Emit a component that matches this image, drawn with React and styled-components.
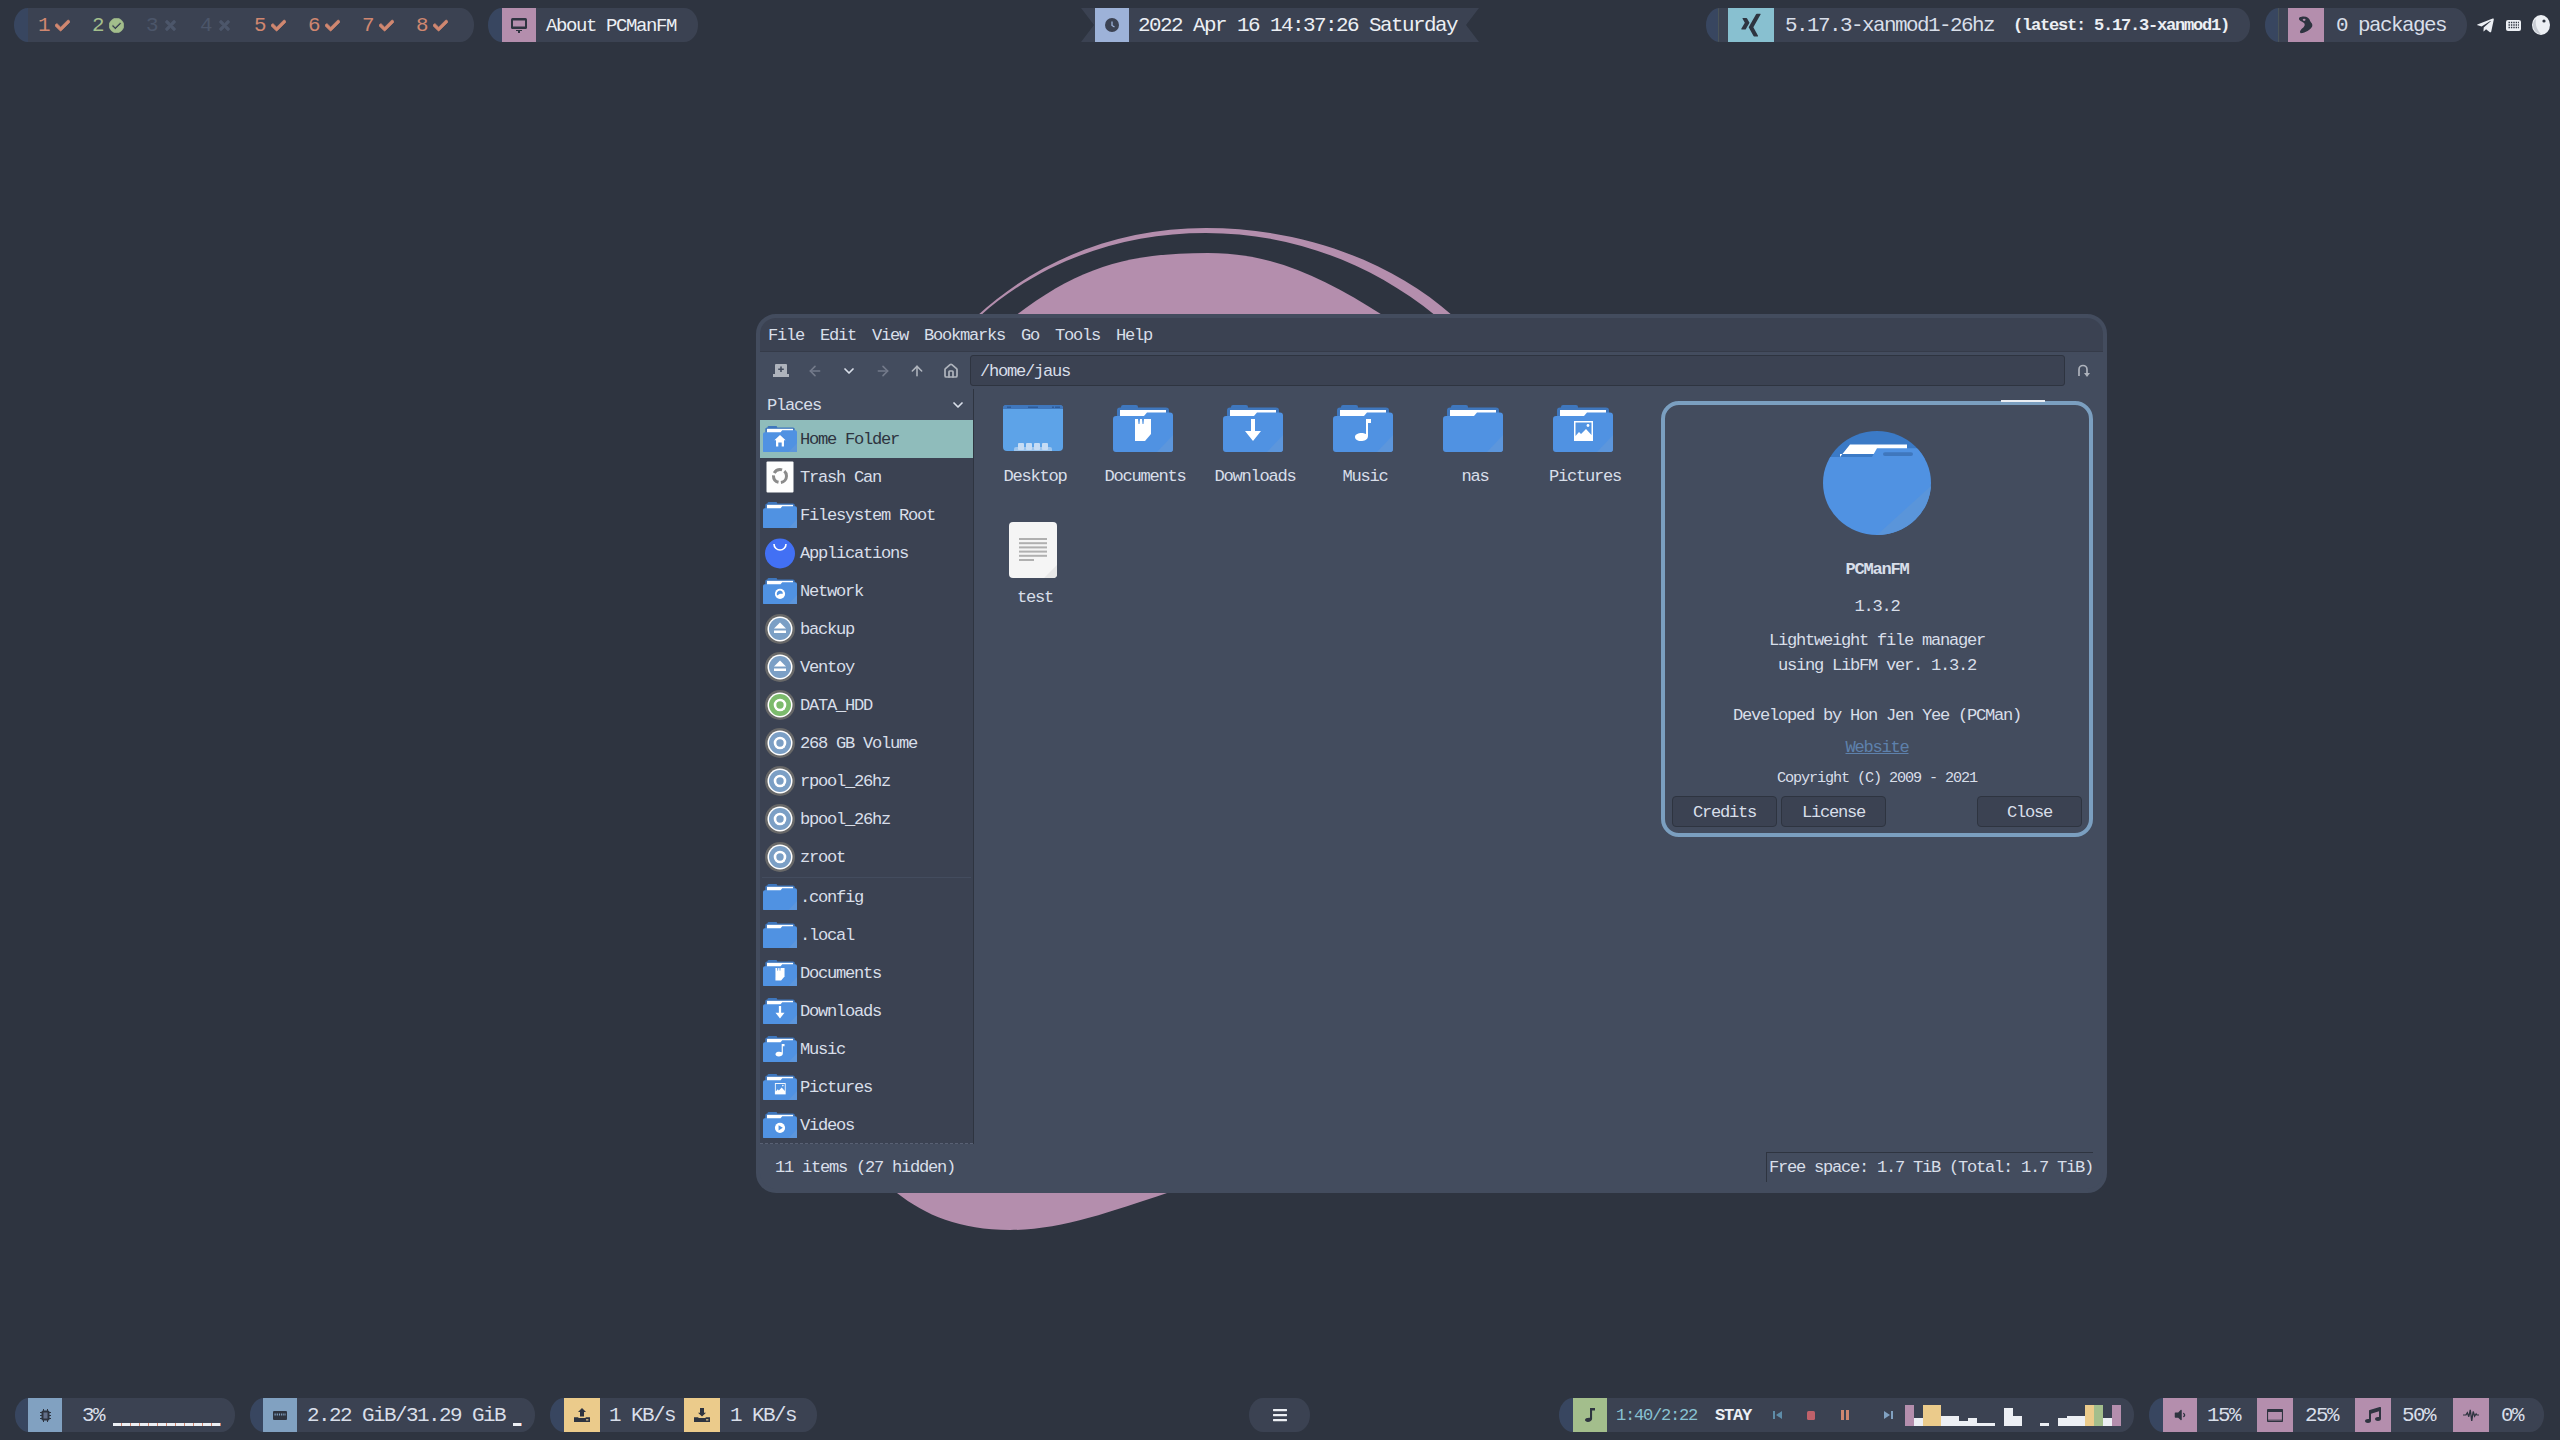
import React from 'react';
import styled, { createGlobalStyle } from 'styled-components';
import { ArrowLeft, ArrowRight, ArrowUp, ChevronDown, Home } from 'lucide-react';
import { FaCheck, FaTimes, FaCheckCircle, FaXing, FaTelegramPlane, FaBars, FaVolumeDown, FaMusic } from 'react-icons/fa';

const Global = createGlobalStyle`
  html, body { margin: 0; padding: 0; background: #2e3440; }
  body { font-family: "Liberation Mono", "DejaVu Sans Mono", monospace; }
  * { box-sizing: border-box; }
`;

const Screen = styled.div`
  position: relative; width: 2560px; height: 1440px; overflow: hidden; background: #2e3440;
  display: flex; flex-direction: column; justify-content: space-between; padding: 8px 0;
`;
const Wallpaper = styled.svg`position: absolute; left: 0; top: 0; width: 2560px; height: 1440px;`;

const Txt = styled.span`
  font-size: ${p => p.$a * 1.9}px;
  letter-spacing: ${p => -p.$a * 0.14}px;
  line-height: 1;
  padding-top: 2px;
  white-space: pre;
  color: ${p => p.$c || '#d8dee9'};
  font-weight: ${p => (p.$b ? 700 : 400)};
  margin-left: ${p => p.$ml || 0}px;
`;

const TopBar = styled.div`
  position: relative; display: grid; height: 34px; grid-template-columns: 1081px 625px 1fr;
`;
const BottomBar = styled.div`
  position: relative; display: grid; height: 34px; grid-template-columns: 1249px 310px 1fr;
`;
const Group = styled.div`display: flex; align-items: center; gap: ${p => p.$gap ?? 15}px; padding-left: ${p => p.$pl || 0}px;`;
const Pill = styled.div`
  display: flex; align-items: center; height: 34px; width: ${p => p.$w}px; flex: none;
  padding-left: ${p => p.$pl || 0}px; border-radius: 14px / 17px; overflow: hidden;
  background: ${p => p.$line
    ? `linear-gradient(to right, #384660 0 ${p.$line}px, #4a5458 ${p.$line}px ${p.$line + 1}px, #3b4252 ${p.$line + 1}px)`
    : `linear-gradient(to right, #384660 0 14px, #3b4252 14px)`};
`;
const Ribbon = styled.div`
  display: flex; align-items: center; height: 34px; width: 398px; padding-left: 14px; background: #3b4252;
  clip-path: polygon(0 0, 100% 0, calc(100% - 13px) 50%, 100% 100%, 0 100%, 13px 50%);
`;
const Block = styled.div`
  display: flex; align-items: center; justify-content: center; flex: none; height: 34px;
  width: ${p => p.$w || 34}px; background: ${p => p.$c}; color: #2e3440; margin-left: ${p => p.$ml || 0}px;
`;
const Workspace = styled.div`
  display: flex; align-items: center; width: 54px; gap: 6px; color: ${p => p.$c};
  svg { stroke: currentColor; stroke-width: 24px; }
`;
const Tray = styled.div`display: flex; align-items: center; margin-left: -6px; gap: 11px; color: #eceff4; height: 34px;`;
const Meter = styled.div`
  height: 3px; width: ${p => p.$w}px; margin-left: ${p => p.$ml}px; align-self: flex-end; margin-bottom: 6px;
  background: repeating-linear-gradient(to right, #eceff4 0 8px, #d08770 8px 9px);
`;
const Controls = styled.div`display: flex; align-items: center; width: 132px; margin-left: 22px; height: 34px;`;
const Ctl = styled.svg`flex: none; margin-left: ${p => p.$ml || 0}px;`;
const Spectrum = styled.div`display: flex; align-items: flex-end; height: 21px; width: 216px; align-self: flex-end; margin-bottom: 6px;`;
const Bar = styled.div`width: 9px; background: ${p => p.$c};`;
const MenuPill = styled.div`
  width: 61px; height: 34px; border-radius: 14px / 17px; background: #3b4252; color: #eceff4;
  display: flex; align-items: center; justify-content: center;
`;

const Win = styled.div`
  position: absolute; left: 756px; top: 314px; width: 1351px; height: 879px; border: 4px solid #434c5e;
  border-radius: 20px; background: #434c5e; display: flex; flex-direction: column; overflow: hidden;
`;
const MenuBar = styled.div`
  height: 34px; flex: none; background: #3b4252; border-bottom: 1px solid #353b49; display: flex; align-items: center;
  gap: 16px; padding-left: 8px; border-radius: 14px 14px 0 0;
`;
const Toolbar = styled.div`height: 37px; flex: none; display: flex; align-items: center; padding-left: 4px;`;
const ToolSlot = styled.div`width: 34px; flex: none; display: flex; align-items: center; justify-content: center; color: ${p => p.$c || '#aeb3bc'};`;
const PathEntry = styled.div`
  flex: none; width: 1095px; height: 31px; margin-left: 2px; padding-left: 9px; background: #3b4252;
  border: 1px solid #2e3440; border-radius: 3px; display: flex; align-items: center;
`;
const Reload = styled.div`width: 36px; display: flex; justify-content: center; color: #aeb3bc;`;
const Main = styled.div`flex: none; height: 755px; display: flex;`;
const Sidebar = styled.div`width: 214px; flex: none; border-right: 1px solid #2e3440; display: flex; flex-direction: column;`;
const PlacesHead = styled.div`height: 31px; flex: none; display: flex; align-items: center; justify-content: space-between; padding: 0 7px; color: #d8dee9;`;
const SideList = styled.div`flex: none; height: 724px; background: #3b4252; border-bottom: 1px dashed #596174; overflow: hidden;`;
const Row = styled.div`
  height: 38px; display: flex; align-items: center; padding-left: 3px; gap: 3px;
  background: ${p => (p.$sel ? '#8fbcbb' : 'transparent')};
`;
const RowIcon = styled.div`width: 34px; flex: none; display: flex; align-items: center; justify-content: center;`;
const Sep = styled.div`height: 1px; margin: 1px 2px 0; background: #434c5e;`;
const Content = styled.div`
  flex: 1; padding: 16px 0 0 6px; display: grid; grid-template-columns: repeat(6, 110px);
  grid-auto-rows: 117px; align-content: start;
`;
const Cell = styled.div`display: flex; flex-direction: column; align-items: center;`;
const IconSlot = styled.div`height: ${p => p.$h}px; margin-right: 4px;`;
const StatusBar = styled.div`flex: 1; display: flex; align-items: center; justify-content: space-between; padding: 0 10px 0 15px;`;
const FreeBox = styled.div`height: 30px; display: flex; align-items: center; padding-left: 2px; border-left: 1px solid #2e3440; border-top: 1px solid #2e3440;`;

const Dialog = styled.div`
  position: absolute; left: 901px; top: 83px; width: 432px; height: 436px; border: 4px solid #7b9fc0;
  border-radius: 18px; background: #434c5e; display: flex; flex-direction: column; align-items: center; padding-top: 26px;
`;
const Sliver = styled.div`position: absolute; left: 336px; top: -5px; width: 44px; height: 2px; background: #eceff4;`;
const DLine = styled.div`
  height: ${p => p.$h || 22}px; margin-top: ${p => p.$mt}px; display: flex; align-items: center; flex: none;
`;
const Link = styled(Txt)`text-decoration: underline;`;
const Buttons = styled.div`align-self: stretch; display: flex; gap: 4px; padding: 0 7px; margin-top: 7px;`;
const Btn = styled.div`
  width: 105px; height: 31px; background: #3b4252; border: 1px solid #2e3440; border-radius: 4px;
  display: flex; align-items: center; justify-content: center; margin-left: ${p => (p.$push ? 'auto' : 0)};
`;

const Glyph = ({ k }) => {
  const w = '#ffffff';
  switch (k) {
    case 'home': return <path fill={w} d="M30 16 L40 25 H37 V36 H33 V29 H27 V36 H23 V25 H20 Z" />;
    case 'net': return <g><circle cx="30" cy="28" r="9" fill={w} /><path fill="#5294e2" d="M30 22 a6 6 0 0 0-5 9 l5-3 h5 a6 6 0 0 0-5-6z" /></g>;
    case 'doc': return <g><path fill={w} d="M22 14 H38 V29 L32 36 H22 Z" /><path fill="#5294e2" d="M25 14 h2 l-.5 5 h-1 z M29 14 h2 l-.5 5 h-1 z" /></g>;
    case 'down': return <path fill={w} d="M28 14 H32 V26 H38 L30 36 L22 26 H28 Z" />;
    case 'music': return <path fill={w} d="M33 14 H38 V18 H35 V31 C35 35 31 36 28 36 C24 36 22 34 22 32 C22 29 26 28 28 28 C30 28 32 28.5 33 29 Z" />;
    case 'pic': return <g><path fill={w} d="M21 16 H40 V36 H21 Z" /><path fill="#5294e2" d="M22.5 17.5 H38.5 V30 L33 24 L28 29 L26 27 L22.5 31 Z" /><circle cx="35" cy="20.5" r="1.4" fill={w} /></g>;
    case 'video': return <g><circle cx="30" cy="28" r="9" fill={w} /><path fill="#5294e2" d="M27.5 23.5 L35 28 L27.5 32.5 Z" /></g>;
    default: return null;
  }
};

const Folder = ({ w = 60, glyph }) => (
  <svg width={w} height={(w * 47) / 60} viewBox="0 0 60 47" style={{ display: 'block' }}>
    <rect x="8" y="0" width="17" height="7" rx="2" fill="#3f77bd" />
    <rect x="4" y="2.5" width="52" height="13" rx="3" fill="#3f77bd" />
    <rect x="7" y="5" width="46" height="10" fill="#fff" />
    <path fill="#5092e2" d="M3 11 H31 L34 7.5 H57 a3 3 0 0 1 3 3 V44 a3 3 0 0 1-3 3 H3 a3 3 0 0 1-3-3 V14 a3 3 0 0 1 3-3 Z" />
    <path fill="#5c96dc" d="M60 30 V44 a3 3 0 0 1-3 3 H44 Z" />
    <Glyph k={glyph} />
  </svg>
);

const DesktopIcon = () => (
  <svg width="60" height="46" viewBox="0 0 60 46" style={{ display: 'block' }}>
    <rect width="60" height="46" rx="4" fill="#5da3e8" />
    <path d="M3 0 H57 a3 3 0 0 1 3 3 V4 H0 V3 a3 3 0 0 1 3-3Z" fill="#3f77bd" />
    <rect x="4" y="1.5" width="4" height="1.5" fill="#2f5c98" /><rect x="25" y="1.5" width="10" height="1.5" fill="#2f5c98" />
    <rect x="49" y="1.5" width="2" height="1.5" fill="#2f5c98" /><rect x="52" y="1.5" width="5" height="1.5" fill="#2f5c98" />
    <path d="M11 46 V44 a2 2 0 0 1 2-2 H47 a2 2 0 0 1 2 2 V46 Z" fill="#9cc5ee" />
    {[15, 23, 31, 39].map(x => <rect key={x} x={x} y="38" width="6" height="7" rx="1" fill="#c6dcf4" />)}
  </svg>
);

const FileIcon = () => (
  <svg width="48" height="56" viewBox="0 0 48 56" style={{ display: 'block' }}>
    <rect width="48" height="56" rx="4" fill="#f5f5f5" />
    {[17, 21.2, 25.4, 29.6, 33.8].map(y => <rect key={y} x="10" y={y - 1} width="28" height="2" fill="#b0b0b0" />)}
    <rect x="10" y="37" width="15" height="2" fill="#b0b0b0" />
    <path d="M48 43 V52 a4 4 0 0 1-4 4 H35 Z" fill="#e8e8e8" />
  </svg>
);

const Trash = () => (
  <svg width="28" height="32" viewBox="0 0 28 32">
    <rect x="0.5" y="0.5" width="27" height="31" rx="1" fill="#fdfdfd" />
    <g fill="none" stroke="#8a8a8a" strokeWidth="3" strokeDasharray="9 2.5">
      <circle cx="14" cy="15" r="6.5" />
    </g>
  </svg>
);
const Apps = () => (
  <svg width="30" height="31" viewBox="0 0 30 31">
    <circle cx="15" cy="15.5" r="15" fill="#4270f4" />
    <path d="M9 6 a6 6 0 0 0 12 0" fill="none" stroke="#fff" strokeWidth="1.6" />
  </svg>
);
const Drive = ({ eject, c = '#7b9fc5' }) => (
  <svg width="30" height="30" viewBox="0 0 30 30">
    <circle cx="15" cy="15" r="15" fill="#686868" />
    <circle cx="15" cy="15" r="12.5" fill="#fff" />
    <circle cx="15" cy="15" r="11" fill={c} />
    {eject ? (
      <g fill="#fff"><path d="M15 8.5 L21 14.5 H9 Z" /><rect x="9" y="16.5" width="12" height="2.5" /></g>
    ) : (
      <g><circle cx="15" cy="15" r="5" fill="none" stroke="#fff" strokeWidth="2.6" /><path d="M17 19 L20 19.5 L19 16.5 Z" fill="#fff" /></g>
    )}
  </svg>
);

const BigIcon = () => (
  <svg width="108" height="104" viewBox="0 0 108 108" preserveAspectRatio="none" style={{ display: 'block' }}>
    <defs><clipPath id="bigc"><circle cx="54" cy="54" r="54" /></clipPath></defs>
    <g clipPath="url(#bigc)">
      <rect width="108" height="30" fill="#3b7ac6" />
      <path fill="#fff" d="M17 27 L27 14 H84 V24 H17 Z" />
      <path fill="#5092e2" d="M0 27 H49 L54 18 H108 V108 H0 Z" />
      <rect x="60" y="22" width="30" height="4" rx="2" fill="#3f77bd" />
      <path fill="#5a95da" d="M108 57 V108 H54 Z" />
    </g>
  </svg>
);

const Monitor = () => (
  <svg width="16" height="15" viewBox="0 0 16 15">
    <rect x="0" y="0" width="16" height="11" rx="1.5" fill="#2e3440" />
    <rect x="2" y="2.5" width="12" height="6" fill="#b48ead" />
    <path d="M5 12 H11 V13 H9 V15 H7 V13 H5 Z" fill="#2e3440" />
  </svg>
);
const Clock = () => (
  <svg width="14" height="14" viewBox="0 0 14 14">
    <circle cx="7" cy="7" r="7" fill="#3b4252" />
    <path d="M7 3.5 V7.5 L9.5 9" stroke="#9db2d8" strokeWidth="1.3" fill="none" />
  </svg>
);
const Shoe = () => (
  <svg width="17" height="18" viewBox="0 0 18 24" preserveAspectRatio="none">
    <path fill="#2e3440" d="M4 1 C9 0 12 3 13 7 C14 9 16 11 15 14 C13 19 8 22 3 23 C1 21 3 18 5 16 C7 14 8 11 6 9 C4 7 1 6 1 4 C1 2 2 1 4 1Z" />
    <circle cx="6.5" cy="5" r="1.5" fill="#b48ead" />
  </svg>
);
const Keyboard = () => (
  <svg width="15" height="11" viewBox="0 0 15 11">
    <rect width="15" height="11" rx="2" fill="#eceff4" />
    <path stroke="#2e3440" strokeWidth="1.3" strokeDasharray="1.4 1" d="M2.5 2.5 H13 M2.5 5 H13 M2.5 7.5 H13" />
  </svg>
);
const Ball = () => (
  <svg width="18" height="20" viewBox="0 0 18 20">
    <ellipse cx="9" cy="10" rx="9" ry="10" fill="#eceff4" />
    <circle cx="12" cy="6" r="1.6" fill="#2e3440" />
    <path d="M4 4 C3 10 5 15 9 19 C5 19 1 15 1 10 C1 7 2 5 4 4Z" fill="#c8ccd4" />
  </svg>
);
const Chip = () => (
  <svg width="11" height="13" viewBox="0 0 11 13">
    <path stroke="#2e3440" strokeWidth="1" d="M0 3.5 H11 M0 6.5 H11 M0 9.5 H11 M3.5 0 V13 M7.5 0 V13" />
    <rect x="1.5" y="1.5" width="8" height="10" rx="1.5" fill="#2e3440" />
    <rect x="3.5" y="3.5" width="4" height="6" fill="#64708a" />
  </svg>
);
const Memory = () => (
  <svg width="14" height="9" viewBox="0 0 14 9">
    <rect width="14" height="9" rx="1" fill="#2e3440" />
    <path stroke="#81a1c1" strokeWidth="2" strokeDasharray="1.2 1" fill="none" d="M1.5 3.5 H13" />
  </svg>
);
const Transfer = ({ up }) => (
  <svg width="16" height="14" viewBox="0 0 20 18" preserveAspectRatio="none">
    <path fill="#2e3440" d={up ? 'M10 0 L15 5 H12.5 V11 H7.5 V5 H5 Z' : 'M7.5 0 H12.5 V6 H15 L10 11 L5 6 H7.5 Z'} />
    <path fill="#2e3440" d="M0 12 H5 L6 13 H14 L15 12 H20 V18 H0 Z" />
    <rect x="15" y="14.5" width="3" height="1.5" fill="#ebcb8b" />
  </svg>
);
const Note = () => (
  <svg width="10" height="14" viewBox="0 0 12 22" preserveAspectRatio="none">
    <path fill="#2e3440" d="M6 0 H12 V4 H8.5 V17 C8.5 20 6 22 3.5 22 C1.5 22 0 20.5 0 19 C0 16.5 3 15 6 15.5 Z" />
  </svg>
);
const WinGlyph = () => (
  <svg width="16" height="13" viewBox="0 0 16 13">
    <rect x=".5" y=".5" width="15" height="12" rx="1" fill="none" stroke="#2e3440" strokeWidth="1.2" />
    <rect x=".5" y=".5" width="15" height="2.5" fill="#2e3440" />
    <rect x=".5" y="10.5" width="15" height="2" fill="#2e3440" opacity=".6" />
  </svg>
);
const Wave = () => (
  <svg width="16" height="14" viewBox="0 0 22 24" preserveAspectRatio="none">
    <path stroke="#2e3440" strokeWidth="1.8" fill="none" d="M0 12 H4 L6 8 L8 15 L10 3 L12 22 L14 6 L16 14 L18 10 L19 12 H22" />
  </svg>
);

const BookmarkAdd = () => (
  <svg width="16" height="14" viewBox="0 0 16 14">
    <path fill="currentColor" d="M3 0 H13 a1 1 0 0 1 1 1 V10 H16 V13 H0 V10 H2 V1 a1 1 0 0 1 1-1Z" />
    <path stroke="#434c5e" strokeWidth="1.6" d="M8 2.5 V8 M5.2 5.2 H10.8" />
  </svg>
);
const ReloadIcon = () => (
  <svg width="13" height="14" viewBox="0 0 13 14">
    <path d="M2 12 V5.5 a4 4 0 0 1 8 0 V9" fill="none" stroke="currentColor" strokeWidth="1.7" />
    <path d="M7 9 H13 L10 13 Z" fill="currentColor" />
  </svg>
);

const workspaces = [
  { n: 1, c: '#d08770' }, { n: 2, c: '#a3be8c', on: true }, { n: 3, c: '#4c566a', x: true }, { n: 4, c: '#4c566a', x: true },
  { n: 5, c: '#d08770' }, { n: 6, c: '#d08770' }, { n: 7, c: '#d08770' }, { n: 8, c: '#d08770' },
];

const W = '#eceff4', Y = '#ebcb8b', G = '#a3be8c', P = '#b48ead';
const spectrum = [
  [21, P], [8, W], [21, Y], [21, Y], [10, W], [10, W], [5, W], [8, W], [3, W], [3, W], [0, W], [18, W], [10, W],
  [0, W], [0, W], [3, W], [0, W], [8, W], [10, W], [10, W], [21, Y], [21, G], [8, W], [21, P],
];

const places = [
  { t: 'Home Folder', i: <Folder w={34} glyph="home" />, sel: true },
  { t: 'Trash Can', i: <Trash /> },
  { t: 'Filesystem Root', i: <Folder w={34} /> },
  { t: 'Applications', i: <Apps /> },
  { t: 'Network', i: <Folder w={34} glyph="net" /> },
  { t: 'backup', i: <Drive eject /> },
  { t: 'Ventoy', i: <Drive eject /> },
  { t: 'DATA_HDD', i: <Drive c="#7cbb6c" /> },
  { t: '268 GB Volume', i: <Drive /> },
  { t: 'rpool_26hz', i: <Drive /> },
  { t: 'bpool_26hz', i: <Drive /> },
  { t: 'zroot', i: <Drive /> },
];
const bookmarks = [
  { t: '.config' }, { t: '.local' }, { t: 'Documents', g: 'doc' }, { t: 'Downloads', g: 'down' },
  { t: 'Music', g: 'music' }, { t: 'Pictures', g: 'pic' }, { t: 'Videos', g: 'video' },
];
const files = [
  { t: 'Desktop', d: true }, { t: 'Documents', g: 'doc' }, { t: 'Downloads', g: 'down' },
  { t: 'Music', g: 'music' }, { t: 'nas' }, { t: 'Pictures', g: 'pic' },
];

export default function App() {
  return (
    <Screen>
      <Global />
      <Wallpaper viewBox="0 0 2560 1440">
        <g fill="#b48ead">
          <path d="M977 316 C1040 258 1120 228 1206 228 C1300 228 1390 260 1453 316 L1436 316 C1370 262 1290 233 1206 233 C1120 233 1040 262 980 316 Z" />
          <path d="M1015 316 C1080 266 1130 253 1208 253 C1270 253 1320 275 1384 316 Z" />
          <path d="M895 1190 L1170 1190 L1167 1193 C1110 1212 1060 1230 1010 1230 C960 1230 925 1215 897 1193 Z" />
        </g>
      </Wallpaper>

      <TopBar>
        <Group $pl={14} $gap={14}>
          <Pill $w={460} $pl={24}>
            {workspaces.map(w => (
              <Workspace key={w.n} $c={w.c}>
                <Txt $a={11} $c={w.c}>{w.n}</Txt>
                {w.on ? <FaCheckCircle size={15} /> : w.x ? <FaTimes size={15} /> : <FaCheck size={15} />}
              </Workspace>
            ))}
          </Pill>
          <Pill $w={210} $pl={14}>
            <Block $c="#b48ead"><Monitor /></Block>
            <Txt $a={10} $c="#eceff4" $ml={10}>About PCManFM</Txt>
          </Pill>
        </Group>
        <Group>
          <Ribbon>
            <Block $c="#9db2d8"><Clock /></Block>
            <Txt $a={11} $c="#eceff4" $ml={9}>2022 Apr 16 14:37:26 Saturday</Txt>
          </Ribbon>
        </Group>
        <Group>
          <Pill $w={544} $pl={22} $line={12}>
            <Block $c="#88c0d0" $w={46}><FaXing size={26} /></Block>
            <Txt $a={11} $ml={11}>5.17.3-xanmod1-26hz</Txt>
            <Txt $a={9} $b $c="#eceff4" $ml={19}>(latest: 5.17.3-xanmod1)</Txt>
          </Pill>
          <Pill $w={202} $pl={23} $line={13}>
            <Block $c="#b48ead" $w={36}><Shoe /></Block>
            <Txt $a={11} $ml={12}>0 packages</Txt>
          </Pill>
          <Tray>
            <FaTelegramPlane size={19} />
            <Keyboard />
            <Ball />
          </Tray>
        </Group>
      </TopBar>

      <Win>
        <MenuBar>
          {['File', 'Edit', 'View', 'Bookmarks', 'Go', 'Tools', 'Help'].map(m => <Txt key={m} $a={9}>{m}</Txt>)}
        </MenuBar>
        <Toolbar>
          <ToolSlot><BookmarkAdd /></ToolSlot>
          <ToolSlot $c="#737a8a"><ArrowLeft size={16} strokeWidth={2.4} /></ToolSlot>
          <ToolSlot $c="#d8dee9"><ChevronDown size={16} strokeWidth={2.6} /></ToolSlot>
          <ToolSlot $c="#737a8a"><ArrowRight size={16} strokeWidth={2.4} /></ToolSlot>
          <ToolSlot><ArrowUp size={16} strokeWidth={2.4} /></ToolSlot>
          <ToolSlot><Home size={16} strokeWidth={2.6} /></ToolSlot>
          <PathEntry><Txt $a={9}>/home/jaus</Txt></PathEntry>
          <Reload><ReloadIcon /></Reload>
        </Toolbar>
        <Main>
          <Sidebar>
            <PlacesHead><Txt $a={9}>Places</Txt><ChevronDown size={16} strokeWidth={2.6} /></PlacesHead>
            <SideList>
              {places.map(p => (
                <Row key={p.t} $sel={p.sel}>
                  <RowIcon>{p.i}</RowIcon>
                  <Txt $a={9} $c={p.sel ? '#2e3440' : '#d8dee9'}>{p.t}</Txt>
                </Row>
              ))}
              <Sep />
              {bookmarks.map(b => (
                <Row key={b.t}>
                  <RowIcon><Folder w={34} glyph={b.g} /></RowIcon>
                  <Txt $a={9}>{b.t}</Txt>
                </Row>
              ))}
            </SideList>
          </Sidebar>
          <Content>
            {files.map(f => (
              <Cell key={f.t}>
                <IconSlot $h={61}>{f.d ? <DesktopIcon /> : <Folder glyph={f.g} />}</IconSlot>
                <Txt $a={9}>{f.t}</Txt>
              </Cell>
            ))}
            <Cell>
              <IconSlot $h={65}><FileIcon /></IconSlot>
              <Txt $a={9}>test</Txt>
            </Cell>
          </Content>
        </Main>
        <StatusBar>
          <Txt $a={9}>11 items (27 hidden)</Txt>
          <FreeBox><Txt $a={9}>Free space: 1.7 TiB (Total: 1.7 TiB)</Txt></FreeBox>
        </StatusBar>
        <Dialog>
          <Sliver />
          <BigIcon />
          <DLine $mt={23}><Txt $a={9} $b>PCManFM</Txt></DLine>
          <DLine $mt={15}><Txt $a={9}>1.3.2</Txt></DLine>
          <DLine $mt={10} $h={25}><Txt $a={9}>Lightweight file manager</Txt></DLine>
          <DLine $mt={0} $h={25}><Txt $a={9}>using LibFM ver. 1.3.2</Txt></DLine>
          <DLine $mt={27}><Txt $a={9}>Developed by Hon Jen Yee (PCMan)</Txt></DLine>
          <DLine $mt={10}><Link $a={9} $c="#5e81ac">Website</Link></DLine>
          <DLine $mt={9}><Txt $a={8}>Copyright (C) 2009 - 2021</Txt></DLine>
          <Buttons>
            <Btn><Txt $a={9}>Credits</Txt></Btn>
            <Btn><Txt $a={9}>License</Txt></Btn>
            <Btn $push><Txt $a={9}>Close</Txt></Btn>
          </Buttons>
        </Dialog>
      </Win>

      <BottomBar>
        <Group $pl={15}>
          <Pill $w={220} $pl={13}>
            <Block $c="#81a1c1"><Chip /></Block>
            <Txt $a={11} $ml={20}>3%</Txt>
            <Meter $w={108} $ml={9} />
          </Pill>
          <Pill $w={285} $pl={13}>
            <Block $c="#81a1c1"><Memory /></Block>
            <Txt $a={11} $ml={10}>2.22 GiB/31.29 GiB</Txt>
            <Meter $w={9} $ml={8} />
          </Pill>
          <Pill $w={267} $pl={14}>
            <Block $c="#ebcb8b" $w={36}><Transfer up /></Block>
            <Txt $a={11} $ml={9}>1 KB/s</Txt>
            <Block $c="#ebcb8b" $w={36} $ml={9}><Transfer /></Block>
            <Txt $a={11} $ml={10}>1 KB/s</Txt>
          </Pill>
        </Group>
        <Group><MenuPill><FaBars size={16} /></MenuPill></Group>
        <Group>
          <Pill $w={575} $pl={14}>
            <Block $c="#a3be8c"><Note /></Block>
            <Txt $a={9} $c="#88c0d0" $ml={9}>1:40/2:22</Txt>
            <Txt $a={9} $b $c="#eceff4" $ml={18}>STAY</Txt>
            <Controls>
              <Ctl width="9" height="8" viewBox="0 0 9 13" preserveAspectRatio="none"><path fill="#5e8ca8" d="M0 0 H2 V13 H0 Z M9 0 V13 L3 6.5 Z" /></Ctl>
              <Ctl $ml={25} width="8" height="9" viewBox="0 0 8 9"><rect width="8" height="9" rx="1.5" fill="#bf616a" /></Ctl>
              <Ctl $ml={26} width="8" height="10" viewBox="0 0 8 10"><path fill="#d08770" d="M0 0 H3 V10 H0 Z M5 0 H8 V10 H5 Z" /></Ctl>
              <Ctl $ml={35} width="9" height="8" viewBox="0 0 9 13" preserveAspectRatio="none"><path fill="#81a1c1" d="M0 0 L6 6.5 L0 13 Z M7 0 H9 V13 H7 Z" /></Ctl>
            </Controls>
            <Spectrum>
              {spectrum.map(([h, c], i) => <Bar key={i} $c={c} style={{ height: h }} />)}
            </Spectrum>
          </Pill>
          <Pill $w={395} $pl={14}>
            <Block $c="#b48ead"><FaVolumeDown size={14} /></Block>
            <Txt $a={11} $ml={10}>15%</Txt>
            <Block $c="#b48ead" $w={36} $ml={17}><WinGlyph /></Block>
            <Txt $a={11} $ml={12}>25%</Txt>
            <Block $c="#b48ead" $w={36} $ml={17}><FaMusic size={16} /></Block>
            <Txt $a={11} $ml={11}>50%</Txt>
            <Block $c="#b48ead" $w={36} $ml={18}><Wave /></Block>
            <Txt $a={11} $ml={12}>0%</Txt>
          </Pill>
        </Group>
      </BottomBar>
    </Screen>
  );
}
